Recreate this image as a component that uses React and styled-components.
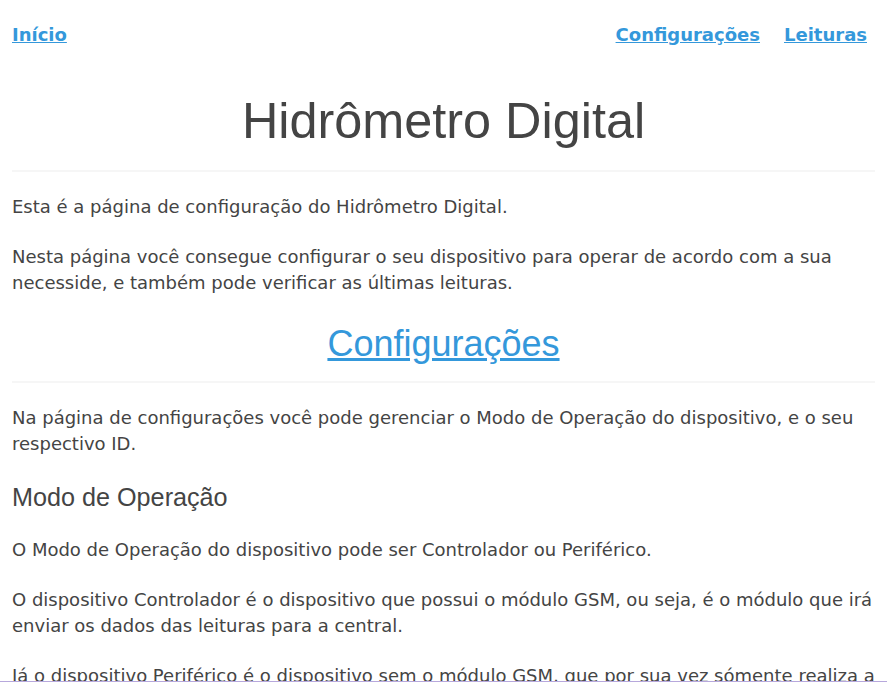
import React from 'react';
import styled, { createGlobalStyle } from 'styled-components';

const GlobalStyle = createGlobalStyle`
  body {
    margin: 0;
    background: #fff;
    font-family: "DejaVu Sans", sans-serif;
    font-size: 18px;
    color: #444;
  }
`;

const Page = styled.div`
  padding: 0 12px;
`;

const Nav = styled.nav`
  display: flex;
  justify-content: space-between;
  align-items: center;
  padding: 24px 8px 0 0;
`;

const NavGroup = styled.div`
  display: flex;
  gap: 24px;
`;

const NavLink = styled.a`
  font-weight: bold;
  font-size: 18px;
  color: #3498db;
  text-decoration: underline;
`;

const Title = styled.h1`
  font-family: "Liberation Sans", Arial, sans-serif;
  font-weight: normal;
  font-size: 2.8em;
  text-align: center;
  margin: 46px 0 -2px;
  padding-bottom: 20px;
  border-bottom: 2px solid #f6f6f6;
`;

const SectionTitle = styled.h2`
  font-family: "Liberation Sans", Arial, sans-serif;
  font-weight: normal;
  font-size: 2em;
  text-align: center;
  margin: 27px 0 -2px;
  padding-bottom: 16px;
  border-bottom: 2px solid #f6f6f6;

  a {
    color: #3498db;
  }
`;

const SubTitle = styled.h3`
  font-family: "Liberation Sans", Arial, sans-serif;
  font-weight: normal;
  font-size: 1.4em;
  margin: 26px 0 25px;
`;

const Text = styled.p`
  line-height: 26px;
  margin: 24px 0;
`;

const BottomLine = styled.div`
  position: fixed;
  left: 0;
  right: 0;
  bottom: 0;
  height: 1px;
  background: #b7a8dc;
`;

export default function App() {
  return (
    <>
      <GlobalStyle />
      <Page>
        <Nav>
          <NavLink href="#">Início</NavLink>
          <NavGroup>
            <NavLink href="#">Configurações</NavLink>
            <NavLink href="#">Leituras</NavLink>
          </NavGroup>
        </Nav>
        <Title>Hidrômetro Digital</Title>
        <Text>Esta é a página de configuração do Hidrômetro Digital.</Text>
        <Text>
          Nesta página você consegue configurar o seu dispositivo para operar de acordo com a sua
          necesside, e também pode verificar as últimas leituras.
        </Text>
        <SectionTitle>
          <a href="#">Configurações</a>
        </SectionTitle>
        <Text>
          Na página de configurações você pode gerenciar o Modo de Operação do dispositivo, e o seu
          respectivo ID.
        </Text>
        <SubTitle>Modo de Operação</SubTitle>
        <Text>O Modo de Operação do dispositivo pode ser Controlador ou Periférico.</Text>
        <Text>
          O dispositivo Controlador é o dispositivo que possui o módulo GSM, ou seja, é o módulo que irá
          enviar os dados das leituras para a central.
        </Text>
        <Text>
          Já o dispositivo Periférico é o dispositivo sem o módulo GSM, que por sua vez sómente realiza a
          leitura e envia os dados para o dispositivo Controlador.
        </Text>
      </Page>
      <BottomLine />
    </>
  );
}
